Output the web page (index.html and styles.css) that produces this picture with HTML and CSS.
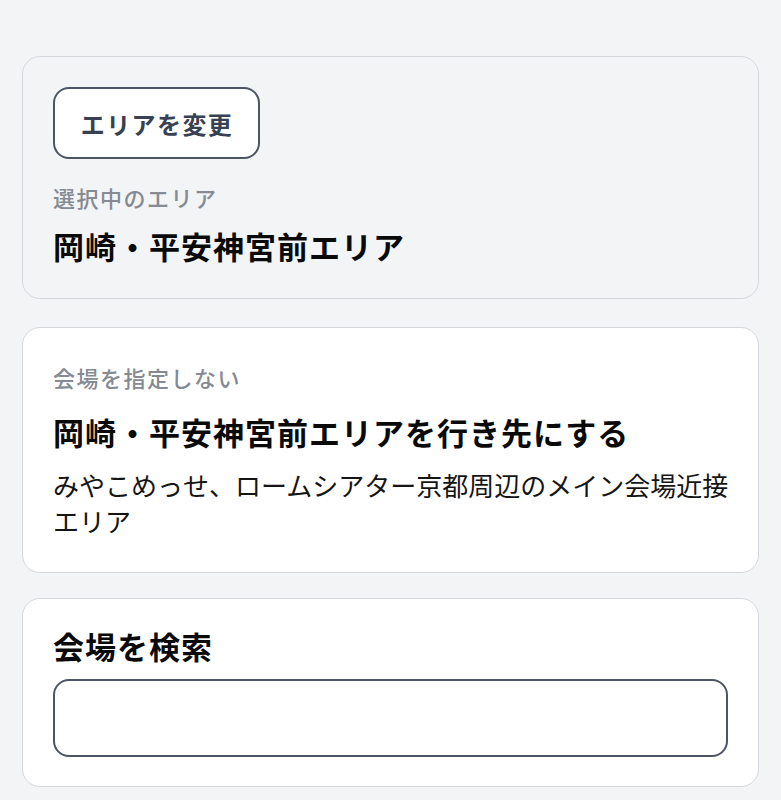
FILE: index.html
```html
<!DOCTYPE html>
<html lang="ja">
<head>
<meta charset="utf-8">
<title>エリア選択</title>
<link rel="stylesheet" href="styles.css">
</head>
<body>
<main class="page">
  <section class="card card-current">
    <button class="btn-change" type="button">エリアを変更</button>
    <p class="label label-current">選択中のエリア</p>
    <h2 class="title">岡崎・平安神宮前エリア</h2>
  </section>
  <section class="card card-area">
    <p class="label">会場を指定しない</p>
    <h2 class="title title-area">岡崎・平安神宮前エリアを行き先にする</h2>
    <p class="desc">みやこめっせ、ロームシアター京都周辺のメイン会場近接エリア</p>
  </section>
  <section class="card card-search">
    <h2 class="title">会場を検索</h2>
    <input class="search-input" type="text" aria-label="会場を検索">
  </section>
</main>
</body>
</html>
```

FILE: styles.css
```css
* { box-sizing: border-box; }
html, body {
  margin: 0;
  padding: 0;
  background: #f3f4f6;
}
body {
  font-family: "Noto Sans CJK JP", "Noto Sans", sans-serif;
  color: #111111;
}
.page {
  padding: 56px 22px 20px;
  display: flex;
  flex-direction: column;
}
.card {
  border: 1px solid #d4d7dc;
  border-radius: 18px;
  background: #ffffff;
  padding: 30px;
  display: flex;
  flex-direction: column;
  align-items: flex-start;
}
.card-current {
  background: #f3f4f6;
  padding: 30px 30px 31px;
  height: 243px;
}
.card-area {
  margin-top: 28px;
  padding: 35px 30px 32px;
  height: 246px;
}
.card-search {
  margin-top: 25px;
  padding: 26px 30px 29px;
  height: 189px;
}
.btn-change {
  font-family: inherit;
  width: 207px;
  height: 74px;
  border: 2px solid #4b5563;
  border-radius: 16px;
  background: #ffffff;
  color: #374151;
  font-size: 24px;
  letter-spacing: 1.4px;
  font-weight: 700;
  padding: 0 0 0 1px;
  cursor: pointer;
}
.label {
  margin: 0;
  font-size: 22px;
  letter-spacing: 1.5px;
  line-height: 28px;
  color: #858a93;
  font-weight: 500;
}
.label-current {
  margin-top: 24px;
}
.title {
  margin: 14px 0 0;
  font-size: 31px;
  letter-spacing: 1px;
  line-height: 42px;
  font-weight: 700;
  color: #0a0a0a;
}
.title-area {
  margin-top: 20px;
}
.card-search .title {
  margin-top: 0;
}
.desc {
  margin: 14px -12px 0 0;
  align-self: stretch;
  font-size: 26px;
  letter-spacing: 0;
  line-height: 36px;
  color: #151515;
}
.search-input {
  margin-top: 12px;
  width: 100%;
  height: 78px;
  border: 2px solid #4b5563;
  border-radius: 16px;
  background: #ffffff;
  font-family: inherit;
  font-size: 24px;
  padding: 0 18px;
}
```
